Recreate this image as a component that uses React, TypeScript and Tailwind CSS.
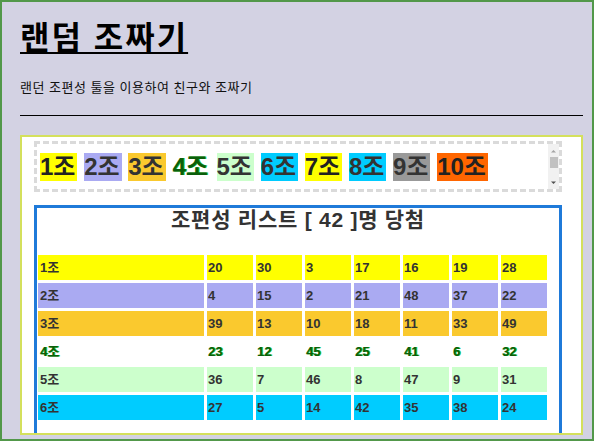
import React from 'react'

type Group = {
  name: string
  bg: string
  text: string
  nums: number[]
}

const groups: Group[] = [
  { name: '1조', bg: 'bg-[#ffff00]', text: 'text-[#333333]', nums: [20, 30, 3, 17, 16, 19, 28] },
  { name: '2조', bg: 'bg-[#aaaaf2]', text: 'text-[#333333]', nums: [4, 15, 2, 21, 48, 37, 22] },
  { name: '3조', bg: 'bg-[#fac92e]', text: 'text-[#333333]', nums: [39, 13, 10, 18, 11, 33, 49] },
  { name: '4조', bg: 'bg-transparent', text: 'text-[#0b5e0b] [text-shadow:1px_0_0_#22c022]', nums: [23, 12, 45, 25, 41, 6, 32] },
  { name: '5조', bg: 'bg-[#ccffcc]', text: 'text-[#333333]', nums: [36, 7, 46, 8, 47, 9, 31] },
  { name: '6조', bg: 'bg-[#00ccff]', text: 'text-[#333333]', nums: [27, 5, 14, 42, 35, 38, 24] },
]

const labels = [
  { num: '1', cls: 'bg-[#ffff00] text-[#222]' },
  { num: '2', cls: 'bg-[#aaaaf2] text-[#333]' },
  { num: '3', cls: 'bg-[#fac92e] text-[#333]' },
  { num: '4', cls: 'bg-transparent text-[#0b5e0b] [text-shadow:1px_0_0_#22c022]' },
  { num: '5', cls: 'bg-[#ccffcc] text-[#333]' },
  { num: '6', cls: 'bg-[#00ccff] text-[#333]' },
  { num: '7', cls: 'bg-[#ffff00] text-[#222]' },
  { num: '8', cls: 'bg-[#00ccff] text-[#333]' },
  { num: '9', cls: 'bg-[#999999] text-[#333]' },
  { num: '10', cls: 'bg-[#ff6600] text-[#222]' },
]

function FakeScrollbar() {
  return (
    <div className="w-[11px] h-full bg-[#f1f1f1] flex flex-col items-center">
      <svg width="11" height="12" viewBox="0 0 11 12" className="mt-[1px]">
        <path d="M3 7.5 L5.5 5 L8 7.5 Z" fill="#a3a3a3" />
      </svg>
      <div className="w-[8px] h-[11px] bg-[#c1c1c1]" />
      <div className="flex-1" />
      <svg width="11" height="12" viewBox="0 0 11 12">
        <path d="M3 4.5 L5.5 7 L8 4.5 Z" fill="#505050" />
      </svg>
    </div>
  )
}

export default function App() {
  return (
    <div
      className="w-[594px] h-[441px] overflow-hidden border-2 border-[#52984a] bg-[#d3d2e3] pl-[18px] pr-[9px] pt-[17px]"
      style={{ fontFamily: '"Liberation Sans", "Noto Sans CJK KR", sans-serif' }}
    >
      <h1 className="inline-block text-[32px] leading-[38px] font-bold tracking-[2px] text-black underline decoration-2 underline-offset-[3px]">
        랜덤 조짜기
      </h1>
      <p className="mt-[22px] text-[13px] leading-[18px] tracking-[0.5px] text-[#111]">
        랜던 조편성 툴을 이용하여 친구와 조짜기
      </p>
      <div className="mt-[18px] h-px bg-black" />

      <div className="mt-[19px] h-[300px] overflow-hidden bg-white border-2 border-[#d4e05c] pl-[12px] pr-[19px] pt-[4px]">
        <div className="h-[51px] border-[3px] border-dashed border-[#dadada] flex">
          <div className="flex-1 flex items-center pl-[3px] whitespace-nowrap">
            <div className="text-[24px] font-bold leading-[28px]">
              {labels.map((l, i) => (
                <React.Fragment key={l.num}>
                  <span className={`inline-block h-[28px] leading-[28px] ${l.cls}`}>
                    {l.num}
                    <span className="tracking-[2px]">조</span>
                  </span>
                  {i < labels.length - 1 ? ' ' : ''}
                </React.Fragment>
              ))}
            </div>
          </div>
          <FakeScrollbar />
        </div>

        <div className="mt-[13px] h-[260px] border-[3px] border-[#1f7ad9] border-b-0">
          <h2 className="text-center text-[21px] leading-[24px] font-bold tracking-[0.75px] text-[#333]">
            조편성 리스트 [ 42 ]명 당첨
          </h2>
          <div className="mt-[23px] ml-[1px] grid grid-cols-[166px_repeat(7,46px)] gap-[3px] auto-rows-[25px] text-[13px] font-bold">
            {groups.map((g) => (
              <React.Fragment key={g.name}>
                <div className={`flex items-center pl-[2px] ${g.bg} ${g.text}`}>{g.name}</div>
                {g.nums.map((n, j) => (
                  <div key={j} className={`flex items-center pl-[1px] ${g.bg} ${g.text}`}>
                    {n}
                  </div>
                ))}
              </React.Fragment>
            ))}
          </div>
        </div>
      </div>
    </div>
  )
}
